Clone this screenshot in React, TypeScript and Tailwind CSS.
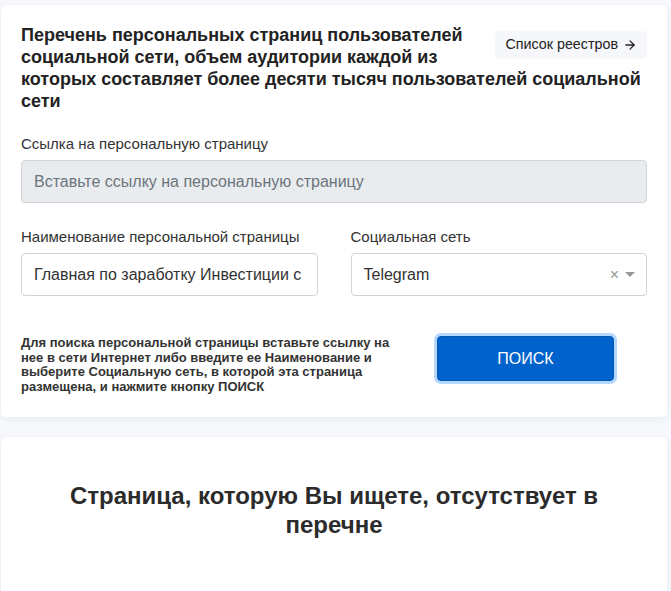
import { ArrowRight } from 'lucide-react';

export default function App() {
  return (
    <div className="min-h-[591px] bg-[#f7f9fc] pt-[5px] pr-[4px] pl-[1px] font-['Liberation_Sans',Arial,sans-serif] text-[#333]">
      {/* Search card */}
      <div className="rounded-[5px] bg-white px-[20px] pb-[23px] pt-[19px] shadow-[0_2px_10px_rgba(30,50,90,0.08)]">
        <div className="flow-root">
          <a className="float-right ml-[20px] mt-[7px] flex h-[28px] items-center gap-[5px] rounded-[5px] bg-[#f5f7fa] pl-[10px] pr-[10px] text-[14.3px] text-[#222]">
            Список реестров
            <ArrowRight size={14} strokeWidth={2.2} />
          </a>
          <h1 className="text-[18px] font-bold leading-[22px] text-[#222]">
            Перечень персональных страниц пользователей социальной сети, объем аудитории каждой из которых составляет более десяти тысяч пользователей социальной сети
          </h1>
        </div>

        <div className="mt-[22px]">
          <label className="block text-[15px] leading-[20px] text-[#333]">Ссылка на персональную страницу</label>
          <input
            disabled
            placeholder="Вставьте ссылку на персональную страницу"
            className="mt-[6px] h-[43px] w-full rounded-[4px] border border-[#ced4da] bg-[#e9ecef] px-[12px] text-[16px] placeholder:text-[#6c757d]"
          />
        </div>

        <div className="mt-[24px] grid grid-cols-2 gap-[33px]">
          <div>
            <label className="block text-[15px] leading-[20px]">Наименование персональной страницы</label>
            <div className="mt-[6px] flex h-[43px] items-center overflow-hidden whitespace-nowrap rounded-[4px] border border-[#ced4da] px-[12px] text-[16px] text-[#333]">
              Главная по заработку Инвестиции с
            </div>
          </div>
          <div>
            <label className="block text-[15px] leading-[20px]">Социальная сеть</label>
            <div className="mt-[6px] flex h-[43px] items-center rounded-[4px] border border-[#ced4da] pl-[12px] pr-[11px] text-[16px] text-[#333]">
              <span className="flex-1">Telegram</span>
              <span className="text-[16px] leading-none text-[#999]">×</span>
              <svg width="10" height="6" viewBox="0 0 10 6" className="ml-[6px]">
                <path d="M0 0h10L5 5z" fill="#999" />
              </svg>
            </div>
          </div>
        </div>

        <div className="mt-[40px] flex items-start">
          <p className="w-[372px] text-[13px] font-bold leading-[14.5px] text-[#333]">
            Для поиска персональной страницы вставьте ссылку на нее в сети Интернет либо введите ее Наименование и выберите Социальную сеть, в которой эта страница размещена, и нажмите кнопку ПОИСК
          </p>
          <button className="ml-[44px] h-[45px] w-[177px] rounded-[4px] border border-[#0056b3] bg-[#0062cc] text-[16px] text-white ring-[3px] ring-[#b3d7ff]">
            ПОИСК
          </button>
        </div>
      </div>

      {/* Result card */}
      <div className="mt-[20px] flex h-[170px] justify-center rounded-[5px] bg-white px-[60px] pt-[44px] shadow-[0_2px_10px_rgba(30,50,90,0.08)]">
        <h2 className="text-center text-[24px] font-bold leading-[29px] text-[#2b2b2b]">
          Страница, которую Вы ищете, отсутствует в перечне
        </h2>
      </div>
    </div>
  );
}
